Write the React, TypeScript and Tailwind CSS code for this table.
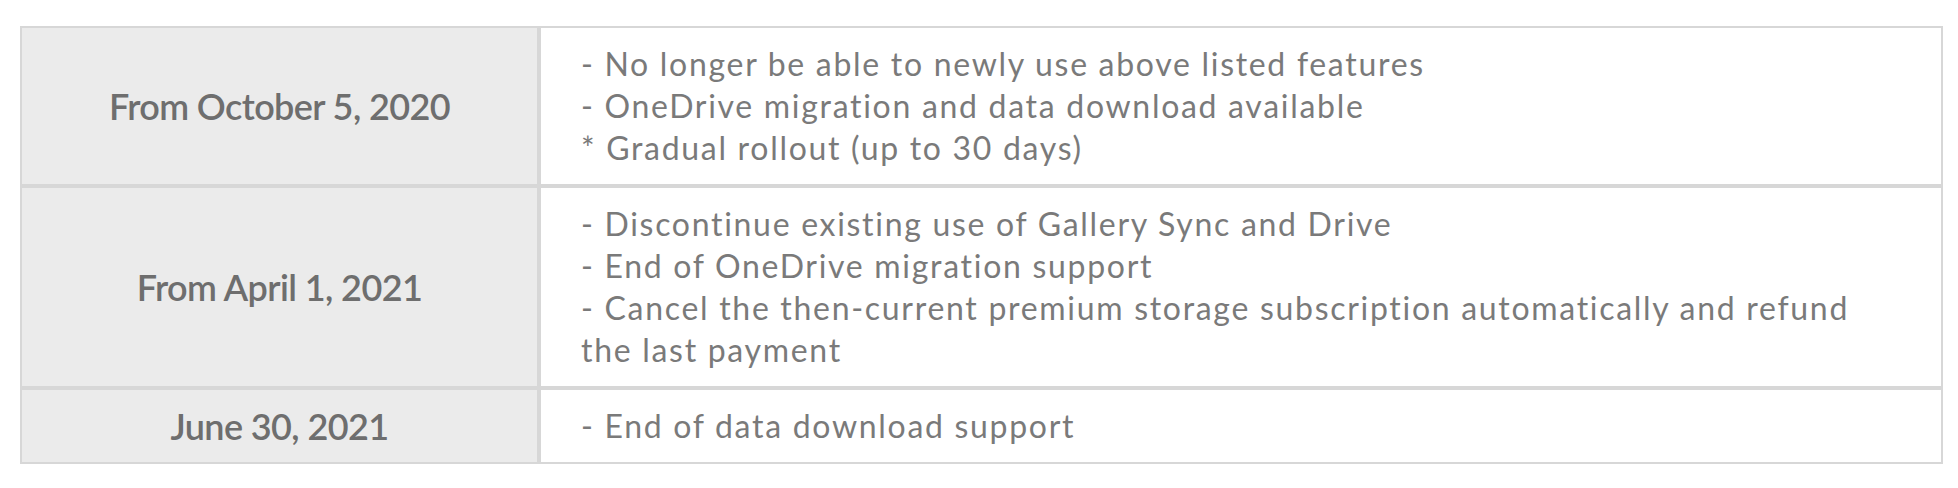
const rows = [
  {
    date: 'From October 5, 2020',
    lines: [
      '- No longer be able to newly use above listed features',
      '- OneDrive migration and data download available',
      '* Gradual rollout (up to 30 days)'
    ]
  },
  {
    date: 'From April 1, 2021',
    lines: [
      '- Discontinue existing use of Gallery Sync and Drive',
      '- End of OneDrive migration support',
      '- Cancel the then-current premium storage subscription automatically and refund the last payment'
    ]
  },
  {
    date: 'June 30, 2021',
    lines: ['- End of data download support']
  }
];

export default function App() {
  return (
    <div className="bg-white min-h-screen pt-[26px] pl-[20px] font-['Lato',_'Liberation_Sans',_sans-serif]">
      <table className="w-[1923px] border-separate border-spacing-0 table-fixed">
        <colgroup>
          <col className="w-[519px]" />
          <col />
        </colgroup>
        <tbody>
          {rows.map(row => (
            <tr key={row.date}>
              <th className="border-2 border-[#d7d7d7] bg-[#ebebeb] text-center align-middle text-[36px] leading-[42px] font-semibold text-[#6e6e6e] tracking-[-0.6px]">
                {row.date}
              </th>
              <td className="border-2 border-[#d7d7d7] bg-white py-[15px] pl-[40px] pr-[50px] text-left align-middle text-[32px] leading-[42px] font-normal text-[#7a7a7a] tracking-[1.7px]">
                {row.lines.map(line => (
                  <div key={line}>{line}</div>
                ))}
              </td>
            </tr>
          ))}
        </tbody>
      </table>
    </div>
  );
}
